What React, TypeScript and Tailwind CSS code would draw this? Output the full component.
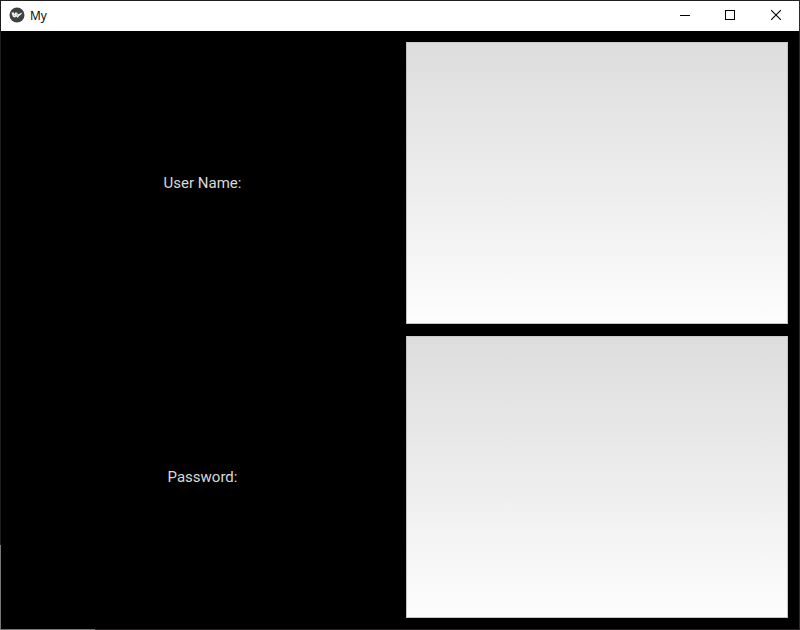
function TitleBar() {
  return (
    <header className="flex h-[30px] shrink-0 items-center justify-between bg-white pb-0.5">
      <div className="flex items-center">
        <svg className="ml-2" width="16" height="16" viewBox="0 0 16 16">
          <circle cx="8" cy="8" r="7.5" fill="#3f4143" />
          <path d="M2.4 5.7 4.7 5.3 5.3 7.6 6 5.4 8 5.5 9.2 7.2 13.5 5.5 11.4 8.3 10.2 8.8 8.6 11 7.5 9.5 6.2 10.5 4 10.1Z" fill="#f4f4f4" />
          <path d="M5.2 8.2 6.1 9.4M8 6.4 8.3 8.8" stroke="#66696b" strokeWidth=".6" />
        </svg>
        <span className="ml-[5px] pt-px text-[12px] leading-4 text-black font-['Open_Sans',sans-serif]">My</span>
      </div>
      <div className="flex h-full items-center">
        <button aria-label="Minimize" className="flex h-full w-11 items-center justify-center">
          <svg width="10" height="10" shapeRendering="crispEdges"><path d="M0 5.5h10" stroke="#000" /></svg>
        </button>
        <button aria-label="Maximize" className="flex h-full w-[46px] items-center justify-center">
          <svg width="10" height="10" shapeRendering="crispEdges"><rect x=".5" y=".5" width="9" height="9" fill="none" stroke="#000" /></svg>
        </button>
        <button aria-label="Close" className="flex h-full w-[46px] items-center justify-center">
          <svg width="10" height="10"><path d="m0 0 10 10m0-10-10 10" stroke="#000" strokeWidth="1.1" /></svg>
        </button>
      </div>
    </header>
  );
}

function Field({ id, label, type }: { id: string; label: string; type: string }) {
  return (
    <div className="grid h-[282px] grid-cols-[405px_382px]">
      <label
        htmlFor={id}
        className="flex items-center justify-center pr-0.5 text-[15px] leading-[18px] text-[#dadada] font-[Roboto,sans-serif]"
      >
        {label}
      </label>
      <input
        id={id}
        type={type}
        className="h-full w-full border border-t-[#cccccc] border-x-[#c2c2c2] border-b-[#c4c4c4] bg-linear-to-b from-[#dddddd] to-[#fdfdfd] outline-none"
      />
    </div>
  );
}

export default function App() {
  return (
    <div className="grid h-[630px] w-[800px] grid-cols-[1px_798px_1px] grid-rows-[629px_1px] overflow-hidden bg-black">
      <div className="flex flex-col">
        <div className="h-[545px] bg-[#1c1c1c]" />
        <div className="flex-1 bg-[#777777]" />
      </div>
      <main className="flex flex-col border-t border-[#202020] bg-black">
        <TitleBar />
        <div className="flex flex-col gap-3 pt-[11px]">
          <Field id="username" label="User Name:" type="text" />
          <Field id="password" label="Password:" type="password" />
        </div>
      </main>
      <div className="bg-[#2a2a2a]" />
      <div className="col-span-3 flex">
        <div className="w-[95px] bg-[#777777]" />
        <div className="flex-1 bg-[#242222]" />
      </div>
    </div>
  );
}
